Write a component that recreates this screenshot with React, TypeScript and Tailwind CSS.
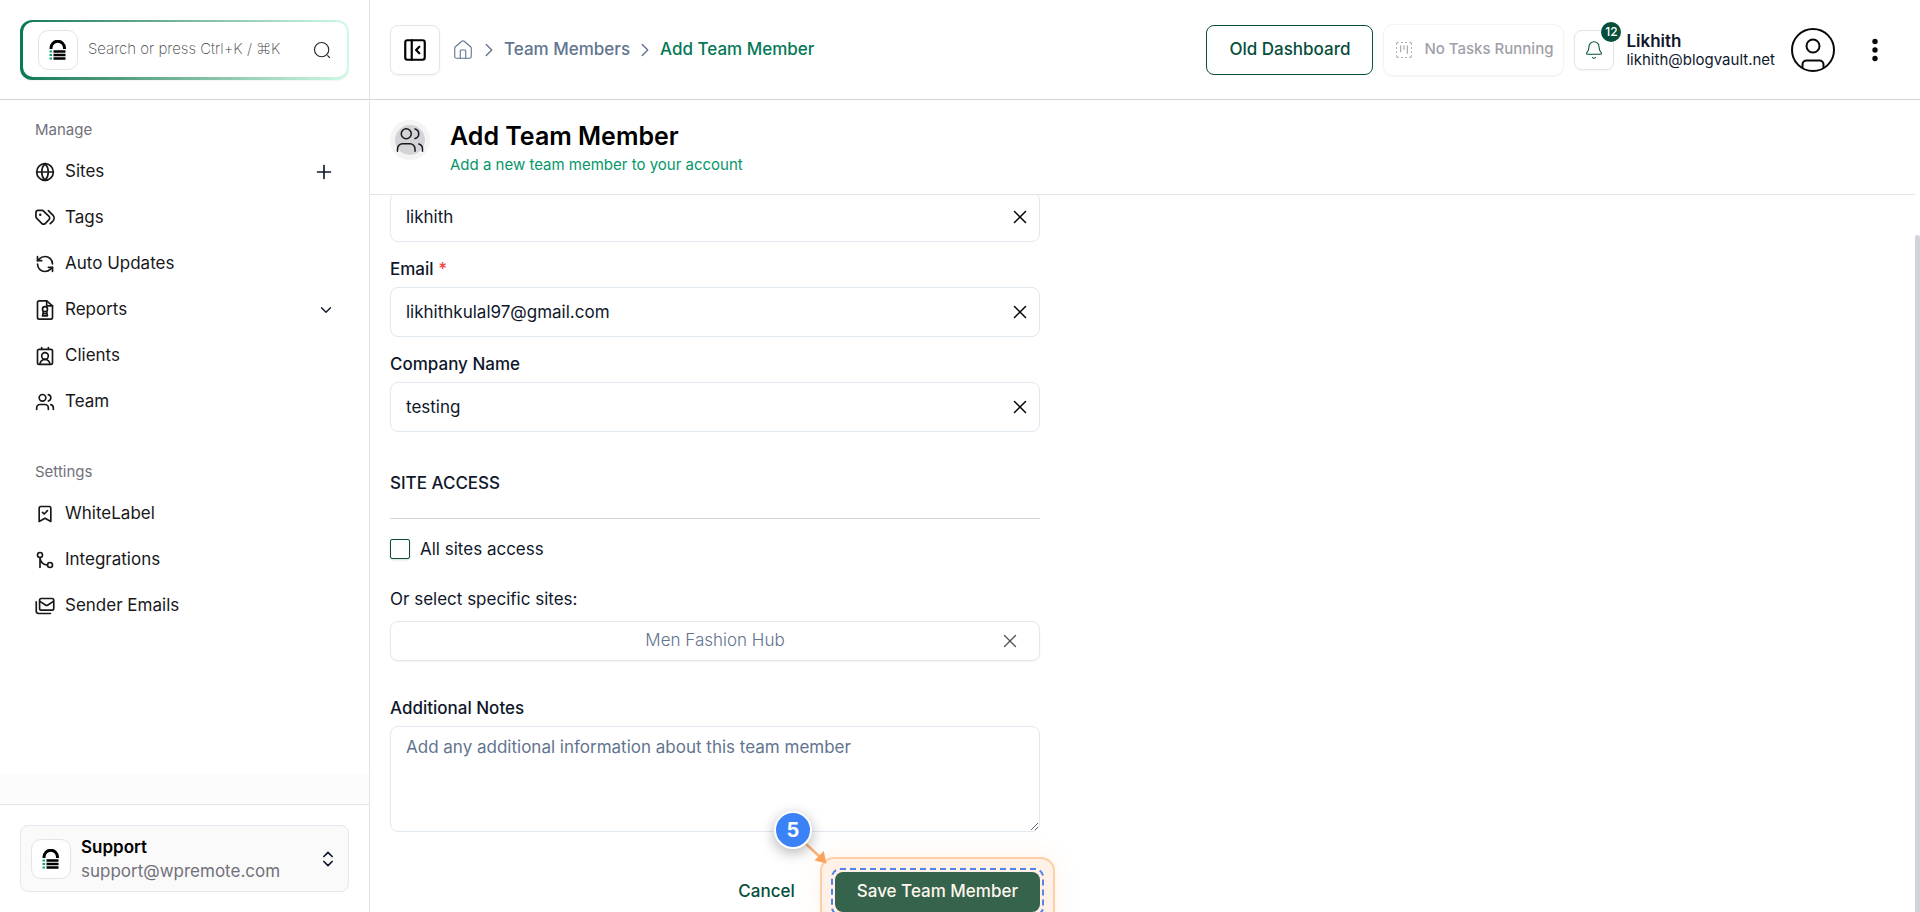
import React, { useLayoutEffect, useRef, useState } from 'react';
import {
  Globe, RefreshCcw, ContactRound, Users, BookmarkCheck, GitMerge, Plus, X,
  ChevronDown, ChevronRight, ChevronsUpDown, PanelLeftClose, House, SquareDashedKanban, Bell,
} from 'lucide-react';

interface FieldProps {
  id: string;
  label: string;
  type?: string;
  required?: boolean;
  value: string;
  onChange: (value: string) => void;
}

interface IconProps {
  className?: string;
}

function LogoIcon() {
  return (
    <svg width="18" height="20" viewBox="0 0 18 20" fill="none">
      <path d="M2 9V8a6.5 6.5 0 0 1 13.500 0v1" stroke="#000" strokeWidth="3" />
      <path d="M4.500 11.500h12M4.500 15h12M4.500 18.500h12" stroke="#000" strokeWidth="2.400" />
      <path d="M.5 11.500h2.500M.5 15h2.500M.5 18.500h2.500" stroke="#10a37f" strokeWidth="2" />
    </svg>
  );
}

function TagsIcon({ className }: IconProps) {
  return (
    <svg className={className} viewBox="1.5 1.5 21 21" fill="none" stroke="currentColor" strokeWidth="1.800" strokeLinecap="round" strokeLinejoin="round">
      <path d="M2.500 6.500v4.200a2 2 0 0 0 .6 1.400l5.700 5.700a2.400 2.400 0 0 0 3.400 0l4-4a2.400 2.400 0 0 0 0-3.400L10.500 4.700A2 2 0 0 0 9.100 4.100H4.900a2.400 2.400 0 0 0-2.400 2.400" />
      <path d="m17.500 18 2.800-2.800a4.500 4.500 0 0 0 0-6.200l-4.800-4.800" />
      <path d="M7 8.500h.01" strokeWidth="2.600" />
    </svg>
  );
}

function ReportIcon({ className }: IconProps) {
  return (
    <svg className={className} viewBox="0 0 24 24" fill="none" stroke="currentColor" strokeWidth="2" strokeLinecap="round" strokeLinejoin="round">
      <path d="M14 1H5a2 2 0 0 0-2 2v18a2 2 0 0 0 2 2h14a2 2 0 0 0 2-2V7z" />
      <path d="M14 1v6h7" />
      <circle cx="12" cy="11" r="3" />
      <path d="m10 14-1 5h6l-1-5M9.500 16.500h5" />
    </svg>
  );
}

function MailsIcon({ className }: IconProps) {
  return (
    <svg className={className} viewBox="0 0 24 24" fill="none" stroke="currentColor" strokeWidth="2" strokeLinecap="round" strokeLinejoin="round">
      <rect x="5.500" y="3" width="17" height="14" rx="2" />
      <path d="m6 6.500 6.500 4.300a2.500 2.500 0 0 0 3 0L22 6.500" />
      <path d="M1.500 7v11a3 3 0 0 0 3 3h14" />
    </svg>
  );
}

function SearchIcon() {
  return (
    <svg width="18" height="18" viewBox="0 0 24 24" fill="none" stroke="#27272a" strokeWidth="1.500" strokeLinecap="round">
      <circle cx="11.500" cy="11.500" r="9.500" />
      <path d="m22 22-2.500-2.500" />
    </svg>
  );
}

function AvatarIcon() {
  return (
    <svg width="44" height="44" viewBox="0 0 44 44" fill="none" stroke="#09090b" strokeWidth="2">
      <circle cx="22" cy="22" r="21" />
      <circle cx="22" cy="18" r="6.500" />
      <path d="M11.500 40v-3.500a4 4 0 0 1 4-4h13a4 4 0 0 1 4 4V40" />
    </svg>
  );
}

function LogoBox() {
  return (
    <span className="flex size-10 shrink-0 items-center justify-center rounded-[10px] border border-zinc-200 bg-white">
      <LogoIcon />
    </span>
  );
}

function Field({ id, label, type = 'text', required, value, onChange }: FieldProps) {
  return (
    <div>
      <label htmlFor={id} className="mb-[6px] block leading-6 font-medium">
        {label} {required && <span className="text-[#ef4444]">*</span>}
      </label>
      <div className="flex h-[50px] items-center rounded-lg border border-slate-200 pr-2">
        <input
          id={id}
          type={type}
          value={value}
          onChange={(e) => onChange(e.target.value)}
          className="h-full min-w-0 flex-1 bg-transparent px-[15px] outline-none"
        />
        <button type="button" aria-label={`Clear ${label}`} onClick={() => onChange('')} className="text-zinc-950">
          <X size={22} strokeWidth={1.7} />
        </button>
      </div>
    </div>
  );
}

const manageLinks = [
  { label: 'Sites', icon: Globe, action: 'add' },
  { label: 'Tags', icon: TagsIcon },
  { label: 'Auto Updates', icon: RefreshCcw },
  { label: 'Reports', icon: ReportIcon, action: 'expand' },
  { label: 'Clients', icon: ContactRound },
  { label: 'Team', icon: Users },
];

const settingsLinks = [
  { label: 'WhiteLabel', icon: BookmarkCheck },
  { label: 'Integrations', icon: GitMerge },
  { label: 'Sender Emails', icon: MailsIcon },
];

function NavSection({ title, links }: { title: string; links: { label: string; icon: React.ElementType; action?: string }[] }) {
  return (
    <div>
      <h2 className="mb-[9px] text-[15px] leading-5 text-zinc-500">{title}</h2>
      <ul>
        {links.map(({ label, icon: Icon, action }) => (
          <li key={label} className="flex h-[46px] items-center justify-between">
            <a href="#" className="flex items-center gap-[10px] text-zinc-900">
              <Icon className="size-5" />
              {label}
            </a>
            {action === 'add' && (
              <button aria-label="Add site"><Plus size={22} strokeWidth={1.8} /></button>
            )}
            {action === 'expand' && (
              <button aria-label="Expand reports"><ChevronDown size={18} strokeWidth={1.8} /></button>
            )}
          </li>
        ))}
      </ul>
    </div>
  );
}

function Sidebar() {
  return (
    <aside className="flex w-[370px] shrink-0 flex-col border-r border-zinc-200">
      <div className="h-[100px] shrink-0 border-b border-zinc-300 p-5">
        <div className="h-[60px] rounded-xl bg-linear-to-r from-[#047857] to-[#d1fae5] p-[2px] pb-[3px] pl-[3px] shadow-xs">
          <label className="flex h-full items-center gap-[10px] rounded-[10px] bg-white pr-4 pl-[15px]">
            <LogoBox />
            <input
              type="text"
              aria-label="Search"
              placeholder="Search or press Ctrl+K / ⌘K"
              className="min-w-0 flex-1 text-[15px] font-extralight outline-none placeholder:text-zinc-700"
            />
            <SearchIcon />
          </label>
        </div>
      </div>

      <nav className="flex flex-1 flex-col gap-[37px] overflow-hidden py-5 pr-[34px] pl-[35px]">
        <NavSection title="Manage" links={manageLinks} />
        <NavSection title="Settings" links={settingsLinks} />
      </nav>
      <div className="h-[30px] shrink-0 bg-[#fcfcfc]" />

      <div className="shrink-0 border-t border-zinc-200 p-5">
        <button className="flex h-[67px] w-full items-center gap-[10px] rounded-lg border border-slate-200 bg-[#fafafa] px-[10px] text-left">
          <LogoBox />
          <span className="flex-1">
            <span className="block leading-6 font-semibold text-black">Support</span>
            <span className="block leading-6 text-zinc-500">support@wpremote.com</span>
          </span>
          <ChevronsUpDown size={20} strokeWidth={2} />
        </button>
      </div>
    </aside>
  );
}

function TopBar() {
  return (
    <header className="flex h-[100px] shrink-0 items-center justify-between border-b border-zinc-300 pr-9 pl-5">
      <div className="flex items-center gap-3">
        <button aria-label="Collapse sidebar" className="flex size-[50px] items-center justify-center rounded-lg border border-zinc-200 shadow-xs">
          <PanelLeftClose size={26} className="text-black" />
        </button>
        <nav className="flex items-center gap-1 font-medium text-slate-500">
          <a href="#" aria-label="Home"><House size={22} strokeWidth={1.2} /></a>
          <ChevronRight size={22} strokeWidth={1.5} />
          <a href="#">Team Members</a>
          <ChevronRight size={22} strokeWidth={1.5} />
          <a href="#" className="text-[#047857]">Add Team Member</a>
        </nav>
      </div>

      <div className="flex items-center gap-[10px]">
        <button className="h-[50px] rounded-lg border border-[#064e3b] px-[22px] font-medium text-[#064e3b]">Old Dashboard</button>
        <button disabled className="flex h-[52px] items-center gap-[10px] rounded-[10px] border border-zinc-100 px-[10px] text-[15px] font-medium text-zinc-400 shadow-xs">
          <SquareDashedKanban size={20} strokeWidth={1.3} />
          No Tasks Running
        </button>
        <button aria-label="Notifications" className="relative flex size-10 items-center justify-center rounded-lg border border-zinc-200 text-[#064e3b] shadow-xs">
          <Bell size={20} strokeWidth={1.3} />
          <span className="absolute -top-[9px] -right-2 flex size-5 items-center justify-center rounded-full bg-[#064e3b] text-xs font-medium text-white">12</span>
        </button>
        <div className="ml-[2px]">
          <p className="leading-5 font-semibold">Likhith</p>
          <p className="text-[15px] leading-[18px]">likhith@blogvault.net</p>
        </div>
        <button aria-label="Account" className="ml-[6px]"><AvatarIcon /></button>
        <button aria-label="More options" className="ml-[21px]">
          <svg width="18" height="24" viewBox="0 0 18 24" fill="#09090b">
            <circle cx="9" cy="3.500" r="2.700" />
            <circle cx="9" cy="12" r="2.700" />
            <circle cx="9" cy="20.500" r="2.700" />
          </svg>
        </button>
      </div>
    </header>
  );
}

function StepMarker() {
  return (
    <span className="pointer-events-none">
      <span className="absolute -inset-[15px] rounded-[14px] border-2 border-[#fdcfa6] bg-[#fff1e8] shadow-[0_0_24px_rgba(251,146,60,0.12)]" />
      <span className="absolute -inset-1">
        <svg className="size-full" fill="none">
          <rect x="1" y="1" width="99%" height="46" rx="8" stroke="#4f83e8" strokeWidth="2" strokeDasharray="6 4" />
        </svg>
      </span>
      <svg className="absolute -top-[30px] -left-[30px]" width="24" height="24" viewBox="0 0 24 24">
        <path d="M1 2l14 13" stroke="#fcb47c" strokeWidth="2.500" />
        <path d="M21.500 21.500 9.500 18.500 18.700 9z" fill="#fba35c" />
      </svg>
      <span className="absolute -top-[61px] -left-[61px] flex size-[38px] items-center justify-center rounded-full border-2 border-white bg-[#3b82f6] text-xl font-bold text-white shadow-[0_4px_14px_rgba(0,0,0,0.3)]">
        5
      </span>
    </span>
  );
}

export default function App() {
  const [name, setName] = useState('likhith');
  const [email, setEmail] = useState('likhithkulal97@gmail.com');
  const [company, setCompany] = useState('testing');
  const scrollRef = useRef<HTMLDivElement>(null);

  useLayoutEffect(() => {
    const el = scrollRef.current;
    if (el) el.scrollTop = el.scrollHeight;
  }, []);

  return (
    <div className="flex h-screen overflow-hidden bg-white font-['Inter',sans-serif] text-[17px] text-slate-900">
      <Sidebar />
      <div className="flex min-w-0 flex-1 flex-col">
        <TopBar />

        <div className="flex min-h-0 flex-1">
          <main ref={scrollRef} className="min-w-0 flex-1 overflow-y-auto [scrollbar-width:none]">
            {/* Page title */}
            <div className="sticky top-0 z-10 flex h-[95px] gap-5 border-b border-zinc-200 bg-white px-5 pt-5">
              <span className="flex size-10 items-center justify-center rounded-full border-[5px] border-zinc-100 bg-zinc-300">
                <Users size={30} strokeWidth={1.2} className="shrink-0 text-zinc-900" />
              </span>
              <div>
                <h1 className="text-[25px] leading-8 font-semibold text-black">Add Team Member</h1>
                <p className="text-[15px] leading-[26px] text-[#059669]">Add a new team member to your account</p>
              </div>
            </div>

            {/* Member form */}
            <div className="overflow-clip px-5 pt-[132px]">
              <form className="max-w-[650px]" onSubmit={(e) => e.preventDefault()}>
                <div className="flex flex-col gap-[15px]">
                  <Field id="name" label="Name" required value={name} onChange={setName} />
                  <Field id="email" label="Email" type="email" required value={email} onChange={setEmail} />
                  <Field id="company" label="Company Name" value={company} onChange={setCompany} />
                </div>

                <h2 className="mt-[39px] border-b border-zinc-300 pb-[23px] leading-6 font-medium">SITE ACCESS</h2>

                <div className="mt-5 flex items-center gap-[10px]">
                  <input
                    id="all-sites"
                    type="checkbox"
                    className="size-5 appearance-none rounded-xs border border-[#064e3b] shadow-sm checked:bg-[#064e3b]"
                  />
                  <label htmlFor="all-sites" className="leading-5">All sites access</label>
                </div>

                <p className="mt-7 leading-6">Or select specific sites:</p>
                <div className="mt-[10px] flex h-10 items-center rounded-lg border border-slate-200 pr-[18px] pl-10 font-light text-slate-500 shadow-xs">
                  <button type="button" className="flex-1 text-center">Men Fashion Hub</button>
                  <button type="button" aria-label="Remove Men Fashion Hub" className="text-zinc-600">
                    <X size={22} strokeWidth={1.5} />
                  </button>
                </div>

                <label htmlFor="notes" className="mt-[35px] mb-[6px] block leading-6 font-medium">Additional Notes</label>
                <textarea
                  id="notes"
                  placeholder="Add any additional information about this team member"
                  className="block h-[106px] w-full rounded-lg border border-slate-200 px-[15px] py-2 outline-none placeholder:text-slate-500"
                />

                <div className="mt-10 flex justify-end gap-5">
                  <button type="button" className="h-10 px-5 font-medium text-[#064e3b]">Cancel</button>
                  <div className="relative">
                    <StepMarker />
                    <button type="submit" className="relative h-10 rounded-lg bg-[#35634b] px-[22px] font-medium text-[#fff6ee]">
                      Save Team Member
                    </button>
                  </div>
                </div>
              </form>
            </div>
          </main>

          {/* Scroll track */}
          <div className="flex w-[5px] flex-col justify-end">
            <div className="h-5/6 rounded-t-full bg-[#d1d5db]" />
          </div>
        </div>
      </div>
    </div>
  );
}
